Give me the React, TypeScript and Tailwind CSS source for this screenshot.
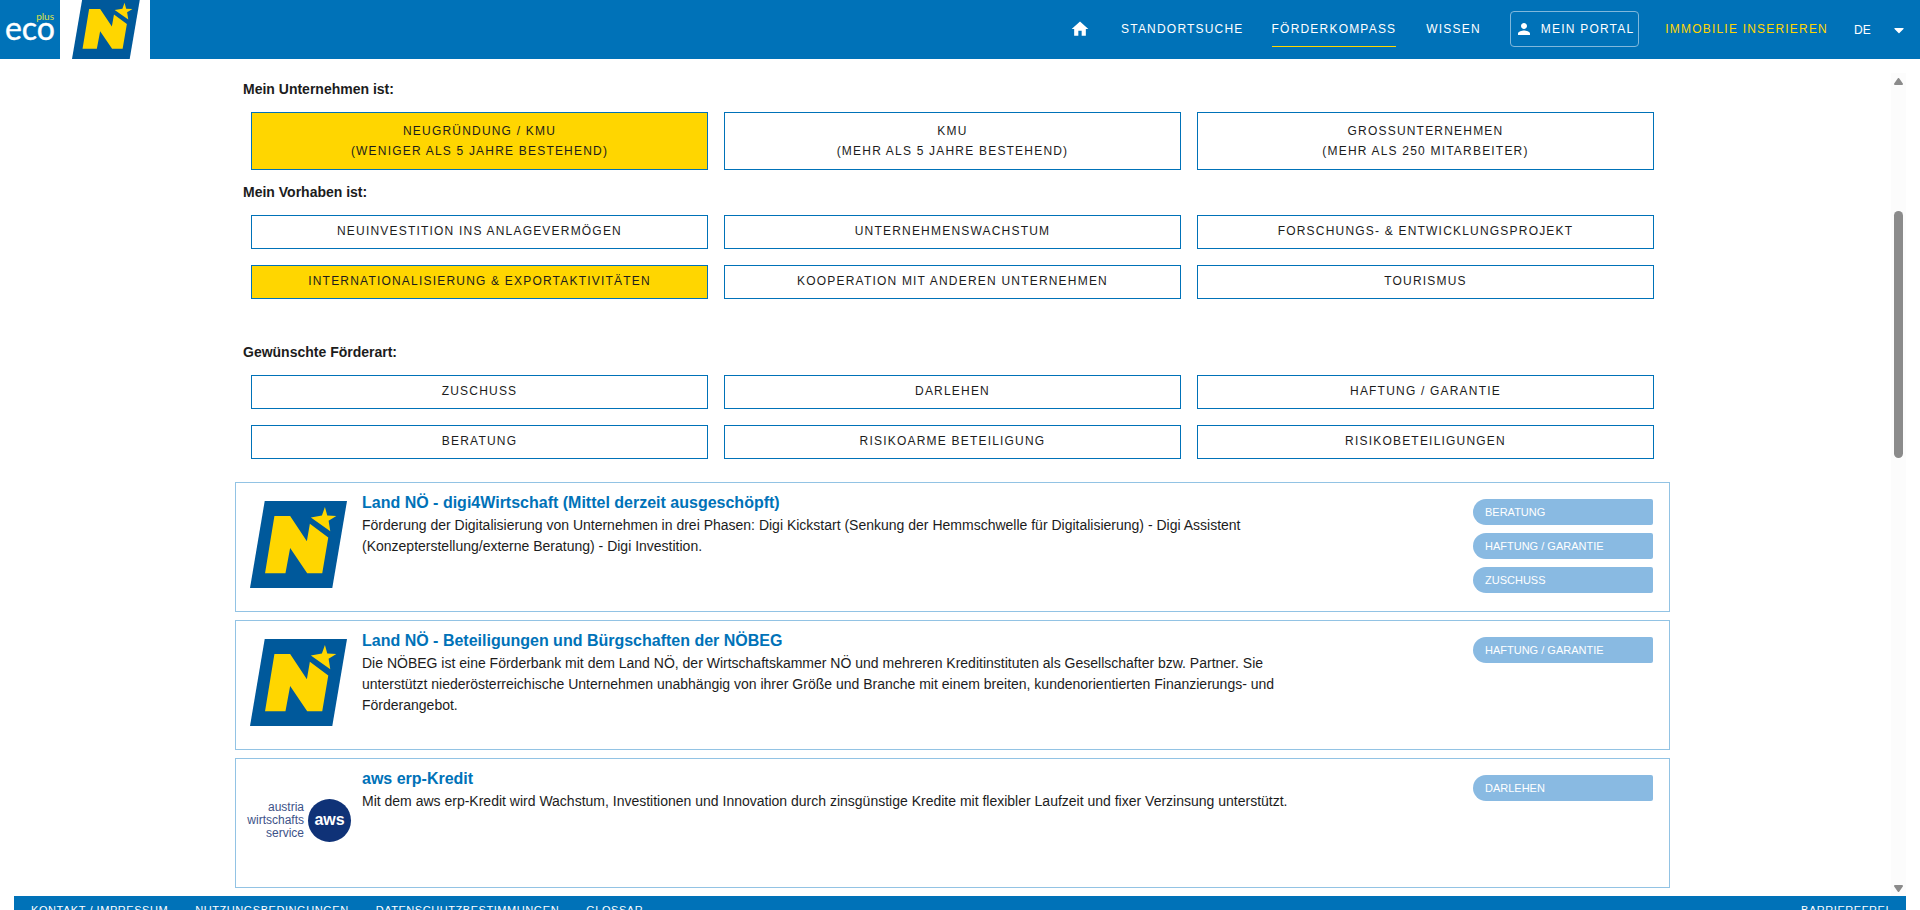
import { FaCaretDown } from "react-icons/fa";
import { MdHome, MdPerson } from "react-icons/md";

type Option = { label: string; detail?: string; active?: boolean };
type Funding = { title: string; text: string; logo: "noe" | "aws"; tags: string[] };

const company: Option[] = [
  { label: "Neugründung / KMU", detail: "(weniger als 5 Jahre bestehend)", active: true },
  { label: "KMU", detail: "(mehr als 5 Jahre bestehend)" },
  { label: "Grossunternehmen", detail: "(mehr als 250 Mitarbeiter)" },
];
const projects: Option[] = [
  { label: "Neuinvestition ins Anlagevermögen" },
  { label: "Unternehmenswachstum" },
  { label: "Forschungs- & Entwicklungsprojekt" },
  { label: "Internationalisierung & Exportaktivitäten", active: true },
  { label: "Kooperation mit anderen Unternehmen" },
  { label: "Tourismus" },
];
const kinds: Option[] = [
  { label: "Zuschuss" },
  { label: "Darlehen" },
  { label: "Haftung / Garantie" },
  { label: "Beratung" },
  { label: "Risikoarme Beteiligung" },
  { label: "Risikobeteiligungen" },
];
const fundings: Funding[] = [
  {
    title: "Land NÖ - digi4Wirtschaft (Mittel derzeit ausgeschöpft)",
    text: "Förderung der Digitalisierung von Unternehmen in drei Phasen: Digi Kickstart (Senkung der Hemmschwelle für Digitalisierung) - Digi Assistent (Konzepterstellung/externe Beratung) - Digi Investition.",
    logo: "noe",
    tags: ["Beratung", "Haftung / Garantie", "Zuschuss"],
  },
  {
    title: "Land NÖ - Beteiligungen und Bürgschaften der NÖBEG",
    text: "Die NÖBEG ist eine Förderbank mit dem Land NÖ, der Wirtschaftskammer NÖ und mehreren Kreditinstituten als Gesellschafter bzw. Partner. Sie unterstützt niederösterreichische Unternehmen unabhängig von ihrer Größe und Branche mit einem breiten, kundenorientierten Finanzierungs- und Förderangebot.",
    logo: "noe",
    tags: ["Haftung / Garantie"],
  },
  {
    title: "aws erp-Kredit",
    text: "Mit dem aws erp-Kredit wird Wachstum, Investitionen und Innovation durch zinsgünstige Kredite mit flexibler Laufzeit und fixer Verzinsung unterstützt.",
    logo: "aws",
    tags: ["Darlehen"],
  },
];

function NoeLogo({ className, viewBox }: { className: string; viewBox: string }) {
  return (
    <svg className={className} viewBox={viewBox} preserveAspectRatio="none" role="img" aria-label="Land Niederösterreich">
      <polygon points="44,0 290,0 246,259 0,259" fill="#00599b" />
      <polygon points="73,45 120,45 170,120 179,68 234,109 216,215 171,215 120,140 106,215 45,215" fill="#ffd600" />
      <polygon points="224,18 231,43 258,45 235,59 240,90 182,49 215,43" fill="#ffd600" />
    </svg>
  );
}

function AwsLogo() {
  return (
    <div className="flex items-center justify-end gap-1">
      <span className="text-right text-xs leading-[13px] text-[#3d5288]">
        austria
        <br />
        wirtschafts
        <br />
        service
      </span>
      <span className="flex size-[43px] shrink-0 items-center justify-center rounded-full bg-[#0f3277] pb-0.5 text-base font-bold text-white">
        aws
      </span>
    </div>
  );
}

function OptionGroup({ title, options, className }: { title: string; options: Option[]; className: string }) {
  return (
    <fieldset className={className}>
      <legend className="ml-2 text-sm leading-[21px] font-bold">{title}</legend>
      <div className="mt-3 grid grid-cols-3 gap-4 px-4">
        {options.map((o) => (
          <button
            key={o.label}
            type="button"
            aria-pressed={!!o.active}
            className={
              "flex flex-col items-center justify-center border border-[#0072b8] text-xs leading-5 tracking-widest uppercase " +
              (o.detail ? "h-[58px] " : "h-[34px] pb-0.5 ") +
              (o.active ? "bg-[#ffd600]" : "bg-white")
            }
          >
            <span>{o.label}</span>
            {o.detail && <span>{o.detail}</span>}
          </button>
        ))}
      </div>
    </fieldset>
  );
}

function FundingCard({ item }: { item: Funding }) {
  return (
    <article className="flex h-[130px] border border-[#92c3e4] px-4">
      <div className="-ml-2 w-[111px] shrink-0 pr-1">
        {item.logo === "noe" ? (
          <NoeLogo className="mt-[18px] ml-[6px] h-[87px] w-[97px]" viewBox="0 0 290 259" />
        ) : (
          <div className="pt-10">
            <AwsLogo />
          </div>
        )}
      </div>
      <div className="min-w-0 flex-1 pt-2 pl-[7px]">
        <h2 className="text-base leading-6 font-bold text-[#0072b8]">
          <a href="#detail">{item.title}</a>
        </h2>
        <p className="max-w-[936px] text-sm leading-[21px]">{item.text}</p>
      </div>
      <ul className="flex w-[180px] shrink-0 flex-col gap-2 pt-4">
        {item.tags.map((t) => (
          <li key={t} className="h-[26px] rounded-l-[13px] rounded-r-[2px] bg-[#89bae2] px-3 text-[11px] leading-[26px] text-white uppercase">
            {t}
          </li>
        ))}
      </ul>
    </article>
  );
}

function Header() {
  return (
    <header className="flex h-[59px] shrink-0 items-stretch justify-between bg-[#0072b8] text-xs text-white">
      <div className="flex">
        <a href="#home" className="block w-[60px]" aria-label="ecoplus">
          <svg className="h-[59px] w-[60px]" viewBox="0 0 60 59" fontFamily="Lato, sans-serif">
            <text x="54" y="20" textAnchor="end" fontSize="10" fill="#dbe04a">plus</text>
            <text x="30" y="40" textAnchor="middle" fontSize="32" fill="#fff" stroke="#fff" strokeWidth="0.4">eco</text>
          </svg>
        </a>
        <a href="#noe" className="flex w-[90px] bg-white pl-3">
          <NoeLogo className="h-[59px] w-[68px]" viewBox="0 6 290 253" />
        </a>
      </div>
      <nav className="flex items-center pr-[13px] pb-px tracking-widest uppercase">
        <a href="#start" aria-label="Startseite" className="mr-[31px]">
          <MdHome size={20} />
        </a>
        <a href="#standort" className="mr-7">Standortsuche</a>
        <a href="#kompass" className="mr-[30px] flex h-9 items-center border-y border-t-transparent border-b-[#ffd600]">Förderkompass</a>
        <a href="#wissen" className="mr-[29px]">Wissen</a>
        <a href="#portal" className="mr-[26px] flex h-9 items-center gap-2 rounded-[4px] border border-[#80b8dc] px-1">
          <MdPerson size={18} />
          Mein Portal
        </a>
        <a href="#inserieren" className="mr-[26px] text-[#ffd600]">Immobilie inserieren</a>
        <button type="button" className="flex w-[53px] items-center justify-between pt-px tracking-normal">
          DE
          <FaCaretDown size={16} />
        </button>
      </nav>
    </header>
  );
}

function Scrollbar() {
  return (
    <div aria-hidden="true" className="mt-[14px] flex w-[15px] shrink-0 flex-col items-center bg-[#fcfcfc] pt-[5px] pb-1">
      <svg className="h-[7px] w-[9px]" viewBox="0 0 9 7">
        <path d="M4.5 1 8 6H1Z" fill="#8b8b8b" stroke="#8b8b8b" strokeWidth="2" strokeLinejoin="round" />
      </svg>
      <div className="mt-[126px] h-[247px] w-[9px] rounded-full bg-[#8b8b8b]" />
      <svg className="mt-auto h-[7px] w-[9px]" viewBox="0 0 9 7">
        <path d="M4.5 6 8 1H1Z" fill="#8b8b8b" stroke="#8b8b8b" strokeWidth="2" strokeLinejoin="round" />
      </svg>
    </div>
  );
}

export default function App() {
  return (
    <div className="flex h-screen flex-col overflow-hidden bg-white font-['Liberation_Sans',Arial,sans-serif] text-[#1c1c1c]">
      <Header />
      <div className="mx-[14px] flex h-[calc(100vh-73px)] shrink-0 overflow-hidden">
        <main className="min-w-0 flex-1 pt-5">
          <div className="mx-auto max-w-[1435px]">
            <OptionGroup title="Mein Unternehmen ist:" options={company} className="" />
            <OptionGroup title="Mein Vorhaben ist:" options={projects} className="mt-3" />
            <OptionGroup title="Gewünschte Förderart:" options={kinds} className="mt-[43px]" />
            <div className="mt-[23px] flex flex-col gap-2">
              {fundings.map((f) => (
                <FundingCard key={f.title} item={f} />
              ))}
            </div>
          </div>
        </main>
        <Scrollbar />
      </div>
      <footer className="mx-[14px] flex h-10 shrink-0 justify-between bg-[#0072b8] px-[17px] pt-1.5 text-[11px] leading-4 text-white uppercase">
        <div className="flex gap-[27px] tracking-wider">
          <a href="#impressum">Kontakt / Impressum</a>
          <a href="#nutzung">Nutzungsbedingungen</a>
          <a href="#datenschutz">Datenschutzbestimmungen</a>
          <a href="#glossar">Glossar</a>
        </div>
        <a href="#barrierefrei" className="tracking-wider">Barrierefrei</a>
      </footer>
    </div>
  );
}
